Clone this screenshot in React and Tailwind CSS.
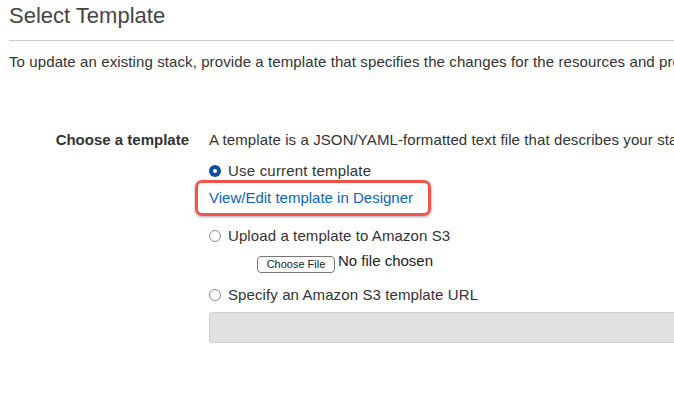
export default function App() {
  return (
    <div className="w-[674px] h-[397px] overflow-hidden bg-white font-['Liberation_Sans',Arial,sans-serif] text-[#333]">
      <div className="pl-[9px] pt-[4px]">
        <h1 className="text-[22px] leading-[24px] text-[#444] whitespace-nowrap">Select Template</h1>
        <div className="mt-[12px] h-px bg-[#ccc]" />
        <p className="mt-[12px] text-[15px] leading-[18px] tracking-[0.1px] whitespace-nowrap">
          To update an existing stack, provide a template that specifies the changes for the resources and properties you want to update.
        </p>
      </div>

      <div className="mt-[60px] flex text-[15px] leading-[18px]">
        <div className="w-[189px] shrink-0 text-right font-bold whitespace-nowrap">Choose a template</div>
        <div className="pl-[20px] flex-1 min-w-0">
          <div className="whitespace-nowrap tracking-[0.1px]">A template is a JSON/YAML-formatted text file that describes your stack's resources and their properties.</div>

          <label className="mt-[13px] flex items-center gap-[7px] whitespace-nowrap tracking-[0.2px]">
            <span className="w-[12px] h-[12px] rounded-full bg-[#0d4ea6] flex items-center justify-center">
              <span className="w-[4px] h-[4px] rounded-full bg-white" />
            </span>
            Use current template
          </label>

          <div className="ml-[-14px] mt-0 w-[236px] h-[36px] rounded-[7px] border-[3px] border-[#f0574a] shadow-[0_1px_3px_rgba(0,0,0,0.35)] flex items-center pl-[11px]">
            <a className="text-[#0a66c2] whitespace-nowrap">View/Edit template in Designer</a>
          </div>

          <label className="mt-[11px] flex items-center gap-[7px] whitespace-nowrap tracking-[0.1px]">
            <span className="w-[12px] h-[12px] rounded-full border border-[#8a8a8a] bg-white" />
            Upload a template to Amazon S3
          </label>

          <div className="mt-[11px] ml-[48px] h-[17px] flex items-start gap-[3px] whitespace-nowrap">
            <span className="h-[17px] w-[78px] rounded-[4px] border border-[#777] bg-white text-[11px] leading-[15px] text-center text-[#222]">Choose File</span>
            <span className="-mt-[4px] text-[#222]">No file chosen</span>
          </div>

          <label className="mt-[13px] flex items-center gap-[7px] whitespace-nowrap tracking-[0.1px]">
            <span className="w-[12px] h-[12px] rounded-full border border-[#8a8a8a] bg-white" />
            Specify an Amazon S3 template URL
          </label>

          <div className="mt-[8px] h-[31px] w-[500px] rounded-[3px] border border-[#cfcfcf] bg-[#e1e1e1]" />
        </div>
      </div>
    </div>
  );
}
